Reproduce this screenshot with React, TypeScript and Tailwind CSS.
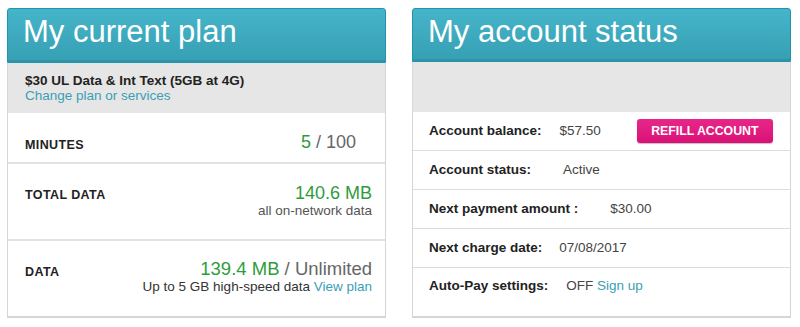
const font = { fontFamily: '"Liberation Sans", Arial, sans-serif' };

const PanelHeader = ({ title }: { title: string }) => (
  <div className="h-[55px] rounded-t-[3px] border border-[#1d96ab] bg-gradient-to-b from-[#46b5c9] to-[#369fb4] pl-[15px] pt-[5px] text-[31px] leading-[36px] text-white shadow-[inset_0_-2px_0_rgba(0,0,0,0.08)]">
    {title}
  </div>
);

const AccountRow = ({
  label,
  gap,
  children,
  last,
}: {
  label: string;
  gap: string;
  children: React.ReactNode;
  last?: boolean;
}) => (
  <div
    className={
      last
        ? "flex h-[48px] items-start pl-[16px] pt-[8px] text-[13.5px]"
        : "flex h-[39px] items-center border-b border-[#dcdcdc] pl-[16px] text-[13.5px]"
    }
  >
    <span className={`font-bold text-[#222] ${gap}`}>{label}</span>
    {children}
  </div>
);

export default function App() {
  return (
    <div className="flex h-[327px] w-[800px] gap-[26px] bg-white pl-[7px] pt-[8px]" style={font}>
      {/* current plan */}
      <div className="flex h-[310px] w-[379px] flex-col">
        <PanelHeader title="My current plan" />
        <div className="flex flex-1 flex-col border-x border-b-2 border-[#d6d6d6]">
          <div className="h-[50px] bg-[#e6e6e6] pl-[17px] pt-[10px] text-[13.5px] leading-[15px]">
            <div className="font-bold text-[#222]">$30 UL Data &amp; Int Text (5GB at 4G)</div>
            <div className="text-[#3a9fb6]">Change plan or services</div>
          </div>
          <div className="flex h-[51px] items-start justify-between border-b-2 border-[#e2e2e2] pl-[17px] pr-[29px]">
            <span className="pt-[24px] text-[12.5px] leading-[16px] font-bold tracking-[0.4px] text-[#222]">
              MINUTES
            </span>
            <span className="pt-[19px] text-[18px] leading-[20px] text-[#666]">
              <span className="text-[#2f9c3c]">5</span> / 100
            </span>
          </div>
          <div className="flex h-[77px] items-start justify-between border-b-2 border-[#e2e2e2] pl-[17px] pr-[13px]">
            <span className="pt-[23px] text-[12.5px] leading-[16px] font-bold tracking-[0.4px] text-[#222]">
              TOTAL DATA
            </span>
            <div className="pt-[19px] text-right">
              <div className="text-[18px] leading-[20px] text-[#2f9c3c]">140.6 MB</div>
              <div className="text-[13.5px] leading-[16px] text-[#555]">all on-network data</div>
            </div>
          </div>
          <div className="flex flex-1 items-start justify-between pl-[17px] pr-[13px]">
            <span className="pt-[23px] text-[12.5px] leading-[16px] font-bold tracking-[0.4px] text-[#222]">
              DATA
            </span>
            <div className="pt-[17px] text-right">
              <div className="text-[18.5px] leading-[21px] text-[#666]">
                <span className="text-[#2f9c3c]">139.4 MB</span> / Unlimited
              </div>
              <div className="text-[13.5px] leading-[16px] text-[#333]">
                Up to 5 GB high-speed data <span className="text-[#3a9fb6]">View plan</span>
              </div>
            </div>
          </div>
        </div>
      </div>

      {/* account status */}
      <div className="flex h-[310px] w-[379px] flex-col">
        <PanelHeader title="My account status" />
        <div className="flex flex-1 flex-col border-x border-b-2 border-[#d6d6d6]">
          <div className="h-[50px] bg-[#e6e6e6]" />
          <AccountRow label="Account balance:" gap="mr-[18px]">
            <span className="text-[#444]">$57.50</span>
            <button className="ml-[36px] h-[24px] w-[136px] rounded-[3px] bg-gradient-to-b from-[#e8268a] to-[#d90f76] text-[12.3px] font-bold text-white shadow-[0_1px_1px_rgba(0,0,0,0.25)]">
              REFILL ACCOUNT
            </button>
          </AccountRow>
          <AccountRow label="Account status:" gap="mr-[32px]">
            <span className="text-[#444]">Active</span>
          </AccountRow>
          <AccountRow label="Next payment amount :" gap="mr-[32px]">
            <span className="text-[#444]">$30.00</span>
          </AccountRow>
          <AccountRow label="Next charge date:" gap="mr-[17px]">
            <span className="text-[#444]">07/08/2017</span>
          </AccountRow>
          <AccountRow label="Auto-Pay settings:" gap="mr-[18px]" last>
            <span className="text-[#444]">
              OFF <span className="text-[#3a9fb6]">Sign up</span>
            </span>
          </AccountRow>
        </div>
      </div>
    </div>
  );
}
